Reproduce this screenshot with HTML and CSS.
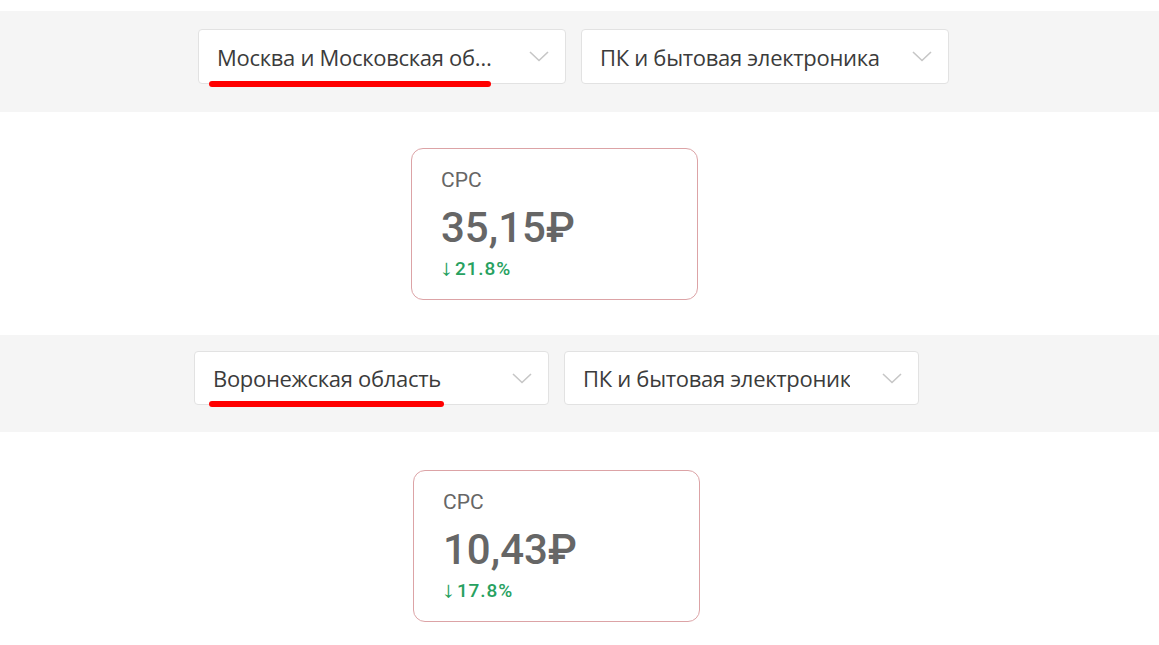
FILE: index.html
```html
<!DOCTYPE html>
<html lang="ru">
<head>
<meta charset="utf-8">
<title>CPC</title>
<link rel="stylesheet" href="styles.css">
</head>
<body>
<div class="page">
  <section class="band band-one">
    <div class="select select-wide">
      <span class="select-text ellipsis">Москва и Московская область</span>
      <svg class="chevron" viewBox="0 0 20 11" width="20" height="11"><path d="M1 1 L10 9.5 L19 1" fill="none" stroke="#c6c6c6" stroke-width="1.6"/></svg>
      <span class="mark mark-one"></span>
    </div>
    <div class="select select-wide">
      <span class="select-text">ПК и бытовая электроника</span>
      <svg class="chevron" viewBox="0 0 20 11" width="20" height="11"><path d="M1 1 L10 9.5 L19 1" fill="none" stroke="#c6c6c6" stroke-width="1.6"/></svg>
    </div>
  </section>

  <div class="card-row card-row-one">
    <div class="card">
      <div class="card-label">CPC</div>
      <div class="card-value">35,15₽</div>
      <div class="card-delta"><span class="arrow">↓</span>21.8%</div>
    </div>
  </div>

  <section class="band band-two">
    <div class="select select-narrow">
      <span class="select-text">Воронежская область</span>
      <svg class="chevron" viewBox="0 0 20 11" width="20" height="11"><path d="M1 1 L10 9.5 L19 1" fill="none" stroke="#c6c6c6" stroke-width="1.6"/></svg>
      <span class="mark mark-two"></span>
    </div>
    <div class="select select-narrow">
      <span class="select-text">ПК и бытовая электроника</span>
      <svg class="chevron" viewBox="0 0 20 11" width="20" height="11"><path d="M1 1 L10 9.5 L19 1" fill="none" stroke="#c6c6c6" stroke-width="1.6"/></svg>
    </div>
  </section>

  <div class="card-row card-row-two">
    <div class="card">
      <div class="card-label">CPC</div>
      <div class="card-value">10,43₽</div>
      <div class="card-delta"><span class="arrow">↓</span>17.8%</div>
    </div>
  </div>
</div>
</body>
</html>
```

FILE: styles.css
```css
html, body {
  margin: 0;
  padding: 0;
  background: #ffffff;
}

.page {
  padding-top: 11px;
  font-family: "Open Sans", "Noto Sans", sans-serif;
}

.band {
  display: flex;
  align-items: flex-start;
  gap: 15px;
  background: #f5f5f5;
  box-sizing: border-box;
}

.band-one {
  height: 101px;
  padding: 18px 0 0 198px;
}

.band-two {
  margin-top: 35px;
  height: 97px;
  padding: 16px 0 0 194px;
}

.select {
  position: relative;
  display: flex;
  align-items: center;
  box-sizing: border-box;
  height: 55px;
  padding: 0 16px 0 18px;
  background: #ffffff;
  border: 1px solid #e2e2e2;
  border-radius: 4px;
}

.select-wide {
  width: 368px;
}

.select-narrow {
  width: 355px;
  height: 54px;
}

.select-text {
  flex: 1;
  min-width: 0;
  margin-right: 32px;
  overflow: hidden;
  white-space: nowrap;
  font-size: 22px;
  color: #3b3b3b;
  letter-spacing: -0.3px;
}

.ellipsis {
  text-overflow: ellipsis;
}

.chevron {
  flex: none;
  display: block;
}

.mark {
  position: absolute;
  height: 6px;
  border-radius: 3px;
  background: #ff0000;
}

.mark-one {
  left: 10px;
  top: 51px;
  width: 282px;
}

.mark-two {
  left: 14px;
  top: 49px;
  width: 235px;
}

.card-row {
  display: flex;
}

.card-row-one {
  margin-top: 36px;
  padding-left: 411px;
}

.card-row-two {
  margin-top: 38px;
  padding-left: 413px;
}

.card {
  box-sizing: border-box;
  width: 287px;
  padding: 18px 20px 20px 29px;
  border: 1.5px solid #dca3a6;
  border-radius: 12px;
  font-family: Roboto, "Noto Sans", sans-serif;
  color: #666666;
}

.card-label {
  font-size: 21px;
  line-height: 26px;
}

.card-value {
  margin-top: 10px;
  font-size: 42px;
  line-height: 50px;
  font-weight: 500;
}

.card-delta {
  margin-top: 5px;
  height: 21px;
  font-size: 19px;
  line-height: 21px;
  font-weight: 500;
  letter-spacing: 0.9px;
  color: #27a160;
}

.arrow {
  display: inline-block;
  font-weight: 400;
  font-size: 22px;
  line-height: 18px;
  margin-right: 2px;
  transform: scaleX(1.3);
}
```
